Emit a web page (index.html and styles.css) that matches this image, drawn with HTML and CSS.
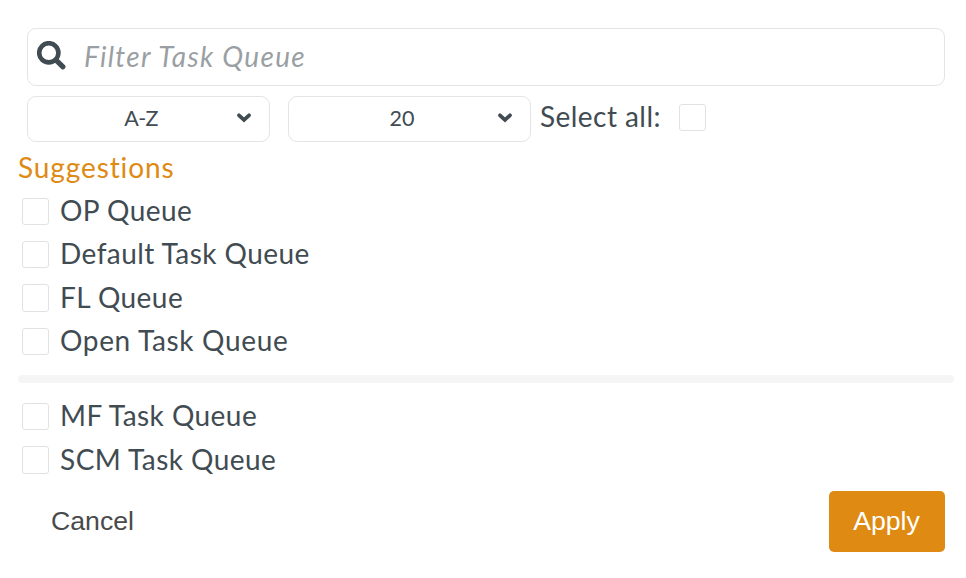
FILE: index.html
```html
<!DOCTYPE html>
<html lang="en">
<head>
  <meta charset="UTF-8">
  <title>Filter Task Queue</title>
  <link rel="stylesheet" href="styles.css">
</head>
<body>
  <div class="filter">
    <div class="search">
      <svg class="search-icon" viewBox="0 0 30 30">
        <circle cx="11.8" cy="11.8" r="9.6" fill="none" stroke="currentColor" stroke-width="4.6"/>
        <path d="M19.3 19.3L26 25.8" fill="none" stroke="currentColor" stroke-width="5.2" stroke-linecap="round"/>
      </svg>
      <input type="text" class="search-input" placeholder="Filter Task Queue">
    </div>

    <div class="controls">
      <button class="select sort">
        <span>A-Z</span>
        <svg class="arrow" viewBox="0 0 14 10"><path d="M2 2.3L7 6.9L12 2.3"/></svg>
      </button>
      <button class="select">
        <span>20</span>
        <svg class="arrow" viewBox="0 0 14 10"><path d="M2 2.3L7 6.9L12 2.3"/></svg>
      </button>
      <label class="select-all"><span>Select all:</span><input type="checkbox" class="checkbox"></label>
    </div>

    <h2 class="title">Suggestions</h2>
    <div class="options">
      <label class="option"><input type="checkbox" class="checkbox"><span>OP Queue</span></label>
      <label class="option"><input type="checkbox" class="checkbox"><span>Default Task Queue</span></label>
      <label class="option"><input type="checkbox" class="checkbox"><span>FL Queue</span></label>
      <label class="option open-task"><input type="checkbox" class="checkbox"><span>Open Task Queue</span></label>
    </div>
    <div class="divider"></div>
    <div class="options">
      <label class="option"><input type="checkbox" class="checkbox"><span>MF Task Queue</span></label>
      <label class="option"><input type="checkbox" class="checkbox"><span>SCM Task Queue</span></label>
    </div>

    <div class="actions">
      <button class="cancel-btn">Cancel</button>
      <button class="apply-btn">Apply</button>
    </div>
  </div>
</body>
</html>
```
FILE: styles.css
```css
* {
  box-sizing: border-box;
}
body {
  margin: 0;
  background-color: #fff;
  color: #414b52;
  font-family: Lato, "Liberation Sans", sans-serif;
  font-size: 28px;
}
button,
input {
  margin: 0;
  font-family: inherit;
  color: inherit;
}
.filter {
  padding: 28px 12px 0 18px;
}
.search {
  display: flex;
  align-items: center;
  height: 58px;
  margin: 0 9px;
  padding: 0 9px;
  border: 1px solid #e3e4e5;
  border-radius: 9px;
}
.search-icon {
  width: 30px;
  height: 30px;
  margin-bottom: 3px;
  flex: none;
}
.search-input {
  flex: 1;
  height: 54px;
  margin-left: 17px;
  padding: 0 0 2px;
  border: none;
  outline: none;
  background: none;
  font-size: 28px;
  font-style: italic;
  letter-spacing: 1.3px;
}
.search-input::placeholder {
  color: #9a9fa3;
  opacity: 1;
}
.controls {
  display: flex;
  height: 46px;
  margin: 10px 9px 0;
}
.select {
  display: flex;
  align-items: center;
  width: 243px;
  height: 46px;
  margin-right: 18px;
  padding: 0 18px 2px 17px;
  background-color: #fff;
  border: 1px solid #e3e4e5;
  border-radius: 9px;
  font-size: 21.5px;
}
.select span {
  flex: 1;
  text-align: center;
}
.sort {
  letter-spacing: -0.6px;
}
.arrow {
  width: 14px;
  height: 10px;
  fill: none;
  stroke: #414b52;
  stroke-width: 3.7;
  stroke-linecap: round;
}
.select-all {
  display: flex;
  align-items: center;
  height: 42px;
  margin-left: -9px;
  letter-spacing: 0.45px;
}
.select-all span {
  margin-bottom: 2px;
}
.select-all .checkbox {
  margin: 1px 0 0 18px;
}
.checkbox {
  appearance: none;
  flex: none;
  width: 27px;
  height: 27.33px;
  background-color: #fff;
  border: 1px solid #e1e2e3;
  border-radius: 3px;
}
.title {
  height: 48px;
  margin: 0;
  color: #de8a13;
  font-size: 28px;
  font-weight: normal;
  line-height: 50px;
  letter-spacing: 0.9px;
}
.option {
  display: flex;
  align-items: center;
  height: 43.33px;
  padding: 0 0 0.5px 4px;
  letter-spacing: 0.45px;
}
.option span {
  margin: 0 0 3.1px 11px;
  line-height: 36px;
  white-space: nowrap;
}
.open-task {
  letter-spacing: 0.67px;
}
.divider {
  height: 8px;
  margin: 12px 0;
  background-color: #f5f5f5;
  border-radius: 4px;
}
.actions {
  display: flex;
  justify-content: space-between;
  margin: 9px 9px 0;
}
.cancel-btn,
.apply-btn {
  height: 61px;
  padding: 0 24px;
  border: none;
  border-radius: 5px;
  font-family: "Liberation Sans", Arial, sans-serif;
  font-size: 26.67px;
}
.cancel-btn {
  background: none;
  color: #4a4a4a;
}
.apply-btn {
  width: 116px;
  padding: 0 1px 0 0;
  background-color: #de8a13;
  color: #fff;
}
```
